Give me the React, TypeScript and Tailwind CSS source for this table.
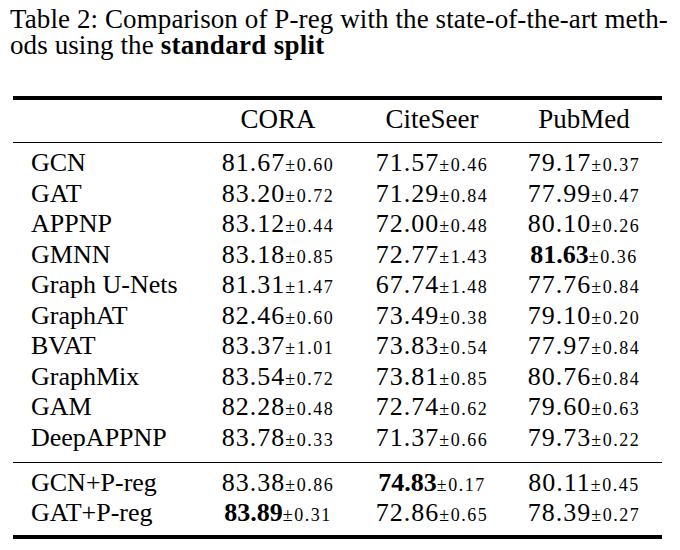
import React from "react";

type Cell = [string, string, boolean?];
type Row = [string, Cell, Cell, Cell];

const top: Row[] = [
  ["GCN", ["81.67", "0.60"], ["71.57", "0.46"], ["79.17", "0.37"]],
  ["GAT", ["83.20", "0.72"], ["71.29", "0.84"], ["77.99", "0.47"]],
  ["APPNP", ["83.12", "0.44"], ["72.00", "0.48"], ["80.10", "0.26"]],
  ["GMNN", ["83.18", "0.85"], ["72.77", "1.43"], ["81.63", "0.36", true]],
  ["Graph U-Nets", ["81.31", "1.47"], ["67.74", "1.48"], ["77.76", "0.84"]],
  ["GraphAT", ["82.46", "0.60"], ["73.49", "0.38"], ["79.10", "0.20"]],
  ["BVAT", ["83.37", "1.01"], ["73.83", "0.54"], ["77.97", "0.84"]],
  ["GraphMix", ["83.54", "0.72"], ["73.81", "0.85"], ["80.76", "0.84"]],
  ["GAM", ["82.28", "0.48"], ["72.74", "0.62"], ["79.60", "0.63"]],
  ["DeepAPPNP", ["83.78", "0.33"], ["71.37", "0.66"], ["79.73", "0.22"]],
];

const bottom: Row[] = [
  ["GCN+P-reg", ["83.38", "0.86"], ["74.83", "0.17", true], ["80.11", "0.45"]],
  ["GAT+P-reg", ["83.89", "0.31", true], ["72.86", "0.65"], ["78.39", "0.27"]],
];

const grid = "grid grid-cols-[188px_154px_154px_150px]";

function Num({ c }: { c: Cell }) {
  return (
    <div className="text-center whitespace-nowrap">
      <span className={c[2] ? "font-bold" : "tracking-[1px]"}>{c[0]}</span>
      <span className="text-[18px] tracking-[1.5px]">±{c[1]}</span>
    </div>
  );
}

function Rows({ rows }: { rows: Row[] }) {
  return (
    <div className="flex flex-col">
      {rows.map((r) => (
        <div key={r[0]} className={`${grid} h-[30.5px] leading-[30.5px]`}>
          <div className="pl-[18px] whitespace-nowrap">{r[0]}</div>
          <Num c={r[1]} />
          <Num c={r[2]} />
          <Num c={r[3]} />
        </div>
      ))}
    </div>
  );
}

export default function App() {
  return (
    <div
      className="w-[680px] h-[550px] bg-white text-black overflow-hidden"
      style={{ fontFamily: '"Liberation Serif", "Times New Roman", serif' }}
    >
      <div className="pt-[6px] pl-[10px] text-[27px] leading-[26px] tracking-[0.1px] whitespace-nowrap">
        <div>Table 2: Comparison of P-reg with the state-of-the-art meth-</div>
        <div>
          ods using the <span className="font-bold tracking-[0.3px]">standard split</span>
        </div>
      </div>
      <div className="mt-[38px] ml-[13px] w-[649px] text-[26px]">
        <div className="h-[4px] bg-black" />
        <div className={`${grid} mt-[4px] h-[30.5px] leading-[30.5px] text-[27px]`}>
          <div />
          <div className="text-center">CORA</div>
          <div className="text-center">CiteSeer</div>
          <div className="text-center">PubMed</div>
        </div>
        <div className="mt-[7.5px] h-[1px] bg-black" />
        <div className="mt-[5px]">
          <Rows rows={top} />
        </div>
        <div className="mt-[8.5px] h-[1px] bg-black" />
        <div className="mt-[5px]">
          <Rows rows={bottom} />
        </div>
        <div className="mt-[6px] h-[4px] bg-black" />
      </div>
    </div>
  );
}
